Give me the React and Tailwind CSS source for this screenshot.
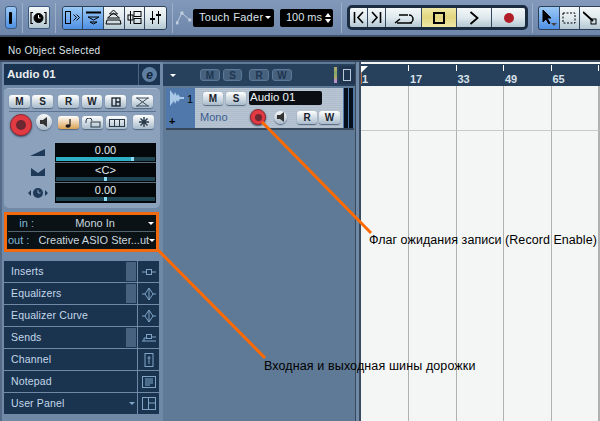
import React from "react";

const FONT = "font-['Liberation_Sans',sans-serif]";

const Sep = ({ className = "" }) => <div className={`w-px h-[30px] bg-[#4d6280] border-r border-[#9db0c8] ${className}`} />;

const ToolBtn = ({ blue, className = "w-[21px]", children }) => (
  <div className={`h-full flex items-center justify-center border-r border-[#33465c] last:border-r-0 ${blue ? "bg-linear-to-b from-[#9ccaf6] to-[#4f90e4]" : "bg-linear-to-b from-[#f4f8f8] via-[#dfe9ee] to-[#b4c8d2]"} ${className}`}>
    {children}
  </div>
);

const Ico = ({ w = 16, h = 16, children, className = "" }) => (
  <svg width={w} height={h} viewBox={`0 0 ${w} ${h}`} fill="none" stroke="#000" className={className}>
    {children}
  </svg>
);

const Toolbar = () => (
  <div className="h-[36px] flex items-center pl-[5px] bg-linear-to-b from-[#8299bb] to-[#6d86a9] border-b border-[#3e5068]">
    <div className="w-[12px] h-[23px] rounded-[3px] flex items-center justify-center bg-linear-to-b from-[#9ccaf6] to-[#4f90e4] border border-[#3c5a80]">
      <div className="w-[3px] h-[12px] rounded-[1px] bg-black" />
    </div>
    <Sep className="ml-[5px]" />
    <div className="ml-[5px] w-[22px] h-[23px] rounded-[2px] flex items-center justify-center bg-linear-to-b from-[#f4f8f8] to-[#b4c8d2] border border-[#3c5a80]">
      <Ico w={17} h={14}>
        <path d="M3 1.5H1v11h2M14 1.5h2v11h-2" strokeWidth="1.2" />
        <circle cx="8.5" cy="7" r="4.5" fill="#000" />
        <path d="M8.5 4v3h2" stroke="#fff" />
      </Ico>
    </div>
    <Sep className="ml-[5px]" />
    <div className="ml-[6px] h-[24px] flex rounded-[3px] overflow-hidden border border-[#2e3f55]">
      <ToolBtn blue>
        <Ico w={17} h={15}>
          <rect x="1.5" y="1.5" width="5" height="12" />
          <path d="M9.5 4.5l3 3-3 3M12.5 4.5l3 3-3 3" />
        </Ico>
      </ToolBtn>
      <ToolBtn blue>
        <Ico w={17} h={15}>
          <path d="M1 2.5h15" strokeWidth="2" />
          <path d="M3 7h11l-5.5 3zM5 12l3.5 2 3.5-2z" />
        </Ico>
      </ToolBtn>
      <ToolBtn>
        <Ico w={17} h={17}>
          <path d="M8.5 1l4 4h-8zM8.5 4l6 5h-12zM2 11h13l1 4H1z" />
        </Ico>
      </ToolBtn>
      <ToolBtn>
        <Ico w={17} h={15}>
          <rect x="2" y="5" width="5" height="5" />
          <rect x="8" y="1.5" width="7" height="5" />
          <rect x="8" y="8.5" width="7" height="5" />
          <path d="M4.5 1v13" />
        </Ico>
      </ToolBtn>
      <ToolBtn>
        <Ico w={13} h={15}>
          <path d="M3.5 1v13M9.5 1v13" />
          <path d="M1 9h5M7 5h5" strokeWidth="2" />
        </Ico>
      </ToolBtn>
    </div>
    <Sep className="ml-[5px]" />
    <svg width="16" height="14" viewBox="0 0 16 14" fill="none" stroke="#c5d0de" className="ml-[3px]">
      <path d="M1 12L6 2l8 7" />
      <rect x="5" y="1" width="2" height="2" fill="#c5d0de" />
      <rect x="0" y="11" width="2" height="2" fill="#c5d0de" />
      <rect x="13" y="8" width="2" height="2" fill="#c5d0de" />
    </svg>
    <div className="ml-[1px] w-[82px] h-[18px] rounded-[2px] bg-black flex items-center justify-between pl-[6px] pr-[3px] text-[11px] text-[#dde4ea] tracking-[0.3px]">
      Touch Fader
      <span className="w-0 h-0 border-x-[3px] border-t-[3px] border-x-transparent border-t-white" />
    </div>
    <div className="ml-[6px] w-[54px] h-[18px] rounded-[2px] bg-black flex items-center justify-between pl-[6px] pr-[2px] text-[11px] text-[#dde4ea]">
      100 ms
      <span className="flex flex-col gap-[2px]">
        <span className="w-0 h-0 border-x-[3px] border-b-[4px] border-x-transparent border-b-white" />
        <span className="w-0 h-0 border-x-[3px] border-t-[4px] border-x-transparent border-t-white" />
      </span>
    </div>
    <Sep className="ml-[8px]" />
    <div className="ml-[5px] h-[25px] flex items-stretch rounded-[5px] border-[3px] border-[#1c2c40] overflow-hidden">
      <ToolBtn className="w-[18px]">
        <Ico w={12} h={13}><path d="M1.5 1v11M10 1L5 6.5l5 5.5" strokeWidth="1.6" /></Ico>
      </ToolBtn>
      <ToolBtn className="w-[18px]">
        <Ico w={12} h={13}><path d="M10.5 1v11M2 1l5 5.5L2 12" strokeWidth="1.6" /></Ico>
      </ToolBtn>
      <ToolBtn className="w-[37px]">
        <Ico w={20} h={13}><path d="M7 12h8a4 4 0 0 0 0-8M14 4H5M3 12h15M1 12l5-4" strokeWidth="1.5" /></Ico>
      </ToolBtn>
      <div className="w-[35px] flex items-center justify-center bg-linear-to-b from-[#f0e8a6] via-[#e2d680] to-[#f0e8a6] border-r border-[#33465c]">
        <div className="w-[12px] h-[12px] border-2 border-black" />
      </div>
      <ToolBtn className="w-[36px]">
        <Ico w={10} h={14}><path d="M1.5 1l7 6-7 6" strokeWidth="1.8" /></Ico>
      </ToolBtn>
      <ToolBtn className="w-[33px]">
        <div className="w-[10px] h-[10px] rounded-full bg-[#b01e28]" />
      </ToolBtn>
    </div>
    <Sep className="ml-[4px]" />
    <div className="ml-[5px] h-[24px] flex rounded-l-[3px] border border-r-0 border-[#2e3f55] overflow-hidden">
      <ToolBtn blue>
        <Ico w={16} h={16}>
          <path d="M2 0l8 8H6l3 5-1 1-3-5-3 3z" fill="#000" />
          <path d="M10 13h6l-3 3z" fill="#444" stroke="none" />
        </Ico>
      </ToolBtn>
      <ToolBtn>
        <Ico w={14} h={12}><rect x="1" y="1" width="12" height="10" strokeDasharray="2 1.5" /></Ico>
      </ToolBtn>
      <ToolBtn className="w-[20px]">
        <Ico w={14} h={14}>
          <path d="M0 1l10 9" strokeWidth="1.8" />
          <rect x="8" y="8" width="5" height="5" />
        </Ico>
      </ToolBtn>
    </div>
  </div>
);

const InfoLine = () => (
  <div className="h-[26px] bg-black border-t border-[#3e4d62] border-b-2 border-b-[#36475c] flex items-center pl-[8px] pt-[3px] text-[10px] text-[#dfe6ea] tracking-[0.35px]">
    No Object Selected
  </div>
);

const Btn = ({ className = "w-[21px]", children }) => (
  <div className={`h-[13px] rounded-[3px] flex items-center justify-center bg-linear-to-b from-[#ffffff] to-[#a9bccb] shadow-[0_1px_1px_#54667f] text-[10px] font-bold text-[#18222c] ${className}`}>
    {children}
  </div>
);

const RecBtn = ({ size = "w-[22px] h-[22px]", inner = "w-[10px] h-[10px]" }) => (
  <div className={`${size} rounded-full bg-[#e23a42] border border-[#8e2a34] flex items-center justify-center shadow-[0_1px_2px_#3d4e66]`}>
    <div className={`${inner} rounded-full bg-[#6b2830]`} />
  </div>
);

const SpeakerBtn = ({ size = "w-[16px] h-[16px]" }) => (
  <div className={`${size} rounded-full bg-linear-to-b from-[#f8fafa] to-[#aabac8] flex items-center justify-center shadow-[0_1px_1px_#54667f]`}>
    <svg width="8" height="10" viewBox="0 0 8 10">
      <path d="M0 3h3l4-3v10L3 7H0z" fill="#333" />
    </svg>
  </div>
);

const Fader = ({ value, fill, knob }) => (
  <div className="h-[20px] flex flex-col border-b border-[#5b6c7c] last:border-b-0">
    <div className="h-[14px] flex items-center justify-center text-[11px] text-[#e4ecf0] leading-none pt-[1px]">{value}</div>
    <div className="mx-[1px] h-[4px] bg-[#1f4452] flex">
      {fill && <div className="bg-[#2db0c6]" style={{ width: fill }} />}
      <div className="w-[3px] bg-[#8adcf4]" style={knob ? { marginLeft: knob } : undefined} />
    </div>
  </div>
);

const Channel = () => (
  <div className="mt-[3px] ml-[2px] w-[156px] h-[120px] rounded-[5px] bg-[#8ba1bc] border-t border-[#a3b5cc] flex flex-col pt-[6px] pl-[5px]">
    <div className="flex items-center">
      <Btn>M</Btn>
      <Btn className="w-[21px] ml-[2px]">S</Btn>
      <Btn className="w-[21px] ml-[5px]">R</Btn>
      <Btn className="w-[20px] ml-[3px]">W</Btn>
      <Btn className="w-[21px] ml-[3px]">
        <svg width="10" height="10" viewBox="0 0 10 10" fill="none" stroke="#18222c" strokeWidth="1.3">
          <rect x="1" y="1" width="8" height="8" />
          <path d="M5 1v8M5 5h4" />
        </svg>
      </Btn>
      <Btn className="w-[21px] ml-[6px]">
        <svg width="15" height="10" viewBox="0 0 15 10" fill="none" stroke="#3c4d5c">
          <path d="M1 1h13M1 9h13M2 1l5.5 4L13 1M2 9l5.5-4L13 9" />
        </svg>
      </Btn>
    </div>
    <div className="mt-[3px] mr-[4px] h-px bg-[#5f7490]" />
    <div className="mt-[2px] flex items-start">
      <div className="ml-[1px]"><RecBtn /></div>
      <div className="ml-[4px]"><SpeakerBtn /></div>
      <Btn className="w-[21px] h-[12px] ml-[6px] mt-[2px] from-[#f2c878] to-[#d9a24e]">
        <svg width="8" height="10" viewBox="0 0 8 10">
          <ellipse cx="3" cy="8" rx="2.5" ry="1.8" fill="#1a1a1a" />
          <path d="M5 1v7" stroke="#1a1a1a" strokeWidth="1.2" />
        </svg>
      </Btn>
      <Btn className="w-[21px] ml-[3px] mt-[2px]">
        <svg width="16" height="10" viewBox="0 0 16 10" fill="none" stroke="#2a3a48">
          <rect x="6" y="4" width="9" height="5" />
          <path d="M1 5V3a3 3 0 0 1 6 0" />
        </svg>
      </Btn>
      <Btn className="w-[21px] ml-[3px] mt-[2px]">
        <svg width="16" height="8" viewBox="0 0 16 8" fill="none" stroke="#2a3a48">
          <rect x="0.5" y="0.5" width="15" height="7" />
          <path d="M5.5 0v8M10.5 0v8" />
        </svg>
      </Btn>
      <Btn className="w-[21px] h-[14px] ml-[6px] mt-[1px] from-[#eef2f4] to-[#a6b8c8]">
        <svg width="10" height="10" viewBox="0 0 10 10" stroke="#2a3a48" strokeWidth="1.4">
          <path d="M5 0v10M0 5h10M1.5 1.5l7 7M8.5 1.5l-7 7" />
        </svg>
      </Btn>
    </div>
    <div className="mt-[7px] flex">
      <div className="w-[46px] flex flex-col items-end pr-[9px]">
        <svg width="16" height="20" viewBox="0 0 16 20" className="mt-[1px] shrink-0">
          <path d="M0 12L15 5v7z" fill="#1f3a58" />
        </svg>
        <svg width="16" height="20" viewBox="0 0 16 20" className="mt-[3px] shrink-0">
          <path d="M1 1l7 5 7-5v8H1z" fill="#1f3a58" />
        </svg>
        <svg width="20" height="12" viewBox="0 0 20 12" className="-mr-[2px] shrink-0">
          <path d="M0 6l3-3v6zM20 6l-3-3v6z" fill="#1f3a58" />
          <circle cx="10" cy="6" r="5" fill="#1f3a58" />
          <path d="M10 3v3h2.5" stroke="#8ba1bc" fill="none" />
        </svg>
      </div>
      <div className="w-[101px] h-[60px] bg-[#04080a] flex flex-col">
        <Fader value="0.00" fill="75px" />
        <Fader value="<C>" knob="48px" />
        <Fader value="0.00" knob="48px" />
      </div>
    </div>
  </div>
);

const Routing = () => (
  <div className="mt-[4px] ml-[2px] w-[155px] h-[40px] border-[3px] border-[#f26a10] bg-[#0b1216] flex flex-col text-[11px] text-[#c9d6de]">
    <div className="h-[17px] flex items-center border-b border-[#53646f] mx-[1px]">
      <span className="w-[26px] text-right text-[#7fb6d6]">in :</span>
      <span className="flex-1 text-center pl-[8px]">Mono In</span>
      <span className="mr-[1px] w-0 h-0 border-x-[3px] border-t-[3px] border-x-transparent border-t-white" />
    </div>
    <div className="flex-1 flex items-center mx-[1px] whitespace-nowrap">
      <span className="w-[26px] text-right text-[#7fb6d6]">out :</span>
      <span className="flex-1 pl-[9px]">Creative ASIO Ster...ut</span>
      <span className="mr-[1px] w-0 h-0 border-x-[3px] border-t-[3px] border-x-transparent border-t-white" />
    </div>
  </div>
);

const iconProps = { fill: "none", stroke: "#7fa4c8" };

const sections = [
  { label: "Inserts", tab: true, icon: <svg width="14" height="8" viewBox="0 0 14 8" {...iconProps}><path d="M0 4h4M10 4h4" /><rect x="4.500" y="1.500" width="5" height="5" /></svg> },
  { label: "Equalizers", tab: true, icon: <svg width="14" height="14" viewBox="0 0 14 14" {...iconProps}><path d="M0 7h3l4-6 4 6h3M3 7l4 6 4-6M7 1v12" /></svg> },
  { label: "Equalizer Curve", icon: <svg width="14" height="14" viewBox="0 0 14 14" {...iconProps}><path d="M0 7h3l4-6 4 6h3M3 7l4 6 4-6M7 1v12" /></svg> },
  { label: "Sends", tab: true, icon: <svg width="14" height="9" viewBox="0 0 14 9" {...iconProps}><path d="M0 8h14M2 8V5h3M10 4h4" /><rect x="4.500" y="1.500" width="5" height="4" /></svg> },
  { label: "Channel", icon: <svg width="10" height="14" viewBox="0 0 10 14" {...iconProps}><rect x="1" y="0.500" width="8" height="13" /><path d="M5 3v8M3.500 5h3" /></svg> },
  { label: "Notepad", icon: <svg width="14" height="12" viewBox="0 0 14 12" {...iconProps}><rect x="0.500" y="0.500" width="13" height="11" /><path d="M3 3h8M3 5h8M3 7h8M3 9h5" /></svg> },
  { label: "User Panel", arrow: true, icon: <svg width="14" height="13" viewBox="0 0 14 13" {...iconProps}><rect x="0.500" y="0.500" width="13" height="12" /><path d="M6.500 0v13M6.500 6h7" /></svg> },
];

const Sections = () => (
  <div className="mt-[9px] ml-[2px] w-[155px] flex flex-col gap-px">
    {sections.map((s) => (
      <div key={s.label} className="h-[21px] flex gap-px">
        <div className="w-[133px] bg-[#1a3450] flex items-center pl-[7px] text-[10.5px] text-[#c4d8ea] tracking-[0.15px]">
          <span className="flex-1">{s.label}</span>
          {s.tab && <div className="w-[10px] h-[19px] mr-px bg-[#46627f]" />}
          {s.arrow && <span className="mr-[2px] w-0 h-0 border-x-[3px] border-t-[3px] border-x-transparent border-t-[#7fa4c8]" />}
        </div>
        <div className="flex-1 bg-[#1a3450] flex items-center justify-center">{s.icon}</div>
      </div>
    ))}
  </div>
);

const Inspector = () => (
  <div className="w-[163px] shrink-0 flex flex-col bg-[#7089a6] border-l-2 border-[#556a86]">
    <div className="mt-[2px] ml-[2px] w-[156px] h-[21px] flex bg-[#1a3350]">
      <div className="flex-1 flex items-center pl-[3px] text-[11.5px] font-bold text-[#e9eef2]">Audio 01</div>
      <div className="w-[22px] border-l border-[#4b6580] flex items-center justify-center">
        <div className="w-[15px] h-[15px] rounded-full bg-[#5f7fa2] flex items-center justify-center text-[12px] font-bold italic text-[#10233a] leading-none">e</div>
      </div>
    </div>
    <Channel />
    <Routing />
    <Sections />
  </div>
);

const HeaderPill = ({ children, className = "w-[20px]" }) => (
  <div className={`h-[12px] rounded-[3px] bg-[#46617e] border border-[#5b7896] flex items-center justify-center text-[10px] font-bold text-[#1e3550] ${className}`}>
    {children}
  </div>
);

const TrackList = () => (
  <div className="w-[193px] shrink-0 flex flex-col bg-[#5f7a96] border-r border-[#3a4a5e]">
    <div className="mt-[2px] h-[22px] flex items-center bg-[#27415d] pl-[7px]">
      <span className="w-0 h-0 border-x-[3px] border-t-[3px] border-x-transparent border-t-white" />
      <HeaderPill className="w-[20px] ml-[24px]">M</HeaderPill>
      <HeaderPill className="w-[19px] ml-[3px]">S</HeaderPill>
      <HeaderPill className="w-[20px] ml-[7px]">R</HeaderPill>
      <HeaderPill className="w-[20px] ml-[3px]">W</HeaderPill>
      <div className="ml-[42px] flex flex-col">
        <span className="w-[3px] h-[4px] bg-[#a8a868]" />
        <span className="w-[3px] h-[4px] bg-[#86a868]" />
        <span className="w-[3px] h-[4px] bg-[#a8a868]" />
        <span className="w-[3px] h-[4px] bg-[#b890c8]" />
      </div>
      <div className="ml-[2px] w-[16px] h-[18px] bg-[#1f3550] flex items-center justify-center">
        <div className="w-[8px] h-[12px] border border-[#b8c8d8]" />
      </div>
    </div>
    <div className="mt-[2px] ml-[3px] mr-[1px] h-[42px] flex border-b-2 border-[#36475c]">
      <div className="w-[29px] bg-[#5078aa] relative flex items-start pl-[4px] pt-[2px] text-[11px] text-black">
        <svg width="14" height="16" viewBox="0 0 14 16" fill="#a9c8e8">
          <path d="M0 0l4 5 1-3 2 4 1-2 2 3h4v2h-4l-2 3-1-2-2 4-1-3-4 5z" />
        </svg>
        <span className="ml-[3px] mt-[1px]">1</span>
        <span className="absolute left-[3px] bottom-[-1px] font-bold">+</span>
      </div>
      <div className="flex-1 bg-[repeating-linear-gradient(0deg,#aebccb_0,#aebccb_1px,#b8c5d2_1px,#b8c5d2_2px)] flex flex-col pl-[8px] pt-[3px]">
        <div className="flex items-center">
          <Btn className="w-[20px]">M</Btn>
          <Btn className="w-[20px] ml-[3px]">S</Btn>
          <div className="ml-[3px] w-[73px] h-[14px] rounded-[2px] bg-[#0a0e12] text-[11.5px] text-[#f0f4f6] flex items-center pl-px leading-none">Audio 01</div>
        </div>
        <div className="mt-[4px] flex items-center">
          <span className="-ml-[3px] w-[50px] text-[11px] text-[#3c5c90] leading-none">Mono</span>
          <RecBtn size="w-[16px] h-[16px]" inner="w-[7px] h-[7px]" />
          <div className="ml-[8px]"><SpeakerBtn size="w-[13px] h-[13px]" /></div>
          <Btn className="w-[20px] ml-[10px]">R</Btn>
          <Btn className="w-[21px] ml-[2px]">W</Btn>
        </div>
      </div>
      <div className="w-[11px] flex gap-px bg-[#5078aa] px-px">
        <div className="flex-1 bg-[#06101c]" />
        <div className="flex-1 bg-[#06101c]" />
      </div>
    </div>
  </div>
);

const bars = ["1", "17", "33", "49", "65", "81"];

const Arranger = () => (
  <div className="flex-1 flex flex-col bg-[#f4f6f6] border-l-2 border-[#3a4a5e] ml-[3px] overflow-hidden">
    <div className="mt-[2px] h-[22px] bg-[#27415d] flex shrink-0 relative">
      <div className="absolute left-0 top-[2px] w-0 h-0 border-t-[7px] border-r-[7px] border-t-white border-r-transparent" />
      <div className="absolute left-0 top-[9px] w-px h-[11px] bg-[#c8683a]" />
      {bars.map((b, i) => (
        <div key={b} className={`shrink-0 relative ${i === 0 ? "w-[48px]" : "w-[47.500px]"} pl-[1px] text-[11px] font-bold text-[#d8e2ea] pt-[10px] leading-none`}>
          {i > 0 && <div className="absolute -left-px top-[1px] h-[6px] w-px bg-white" />}
          {b}
        </div>
      ))}
    </div>
    <div className="flex-1 grid grid-cols-[48px_47.500px_47.500px_47.500px_47.500px_1fr] grid-rows-[45px_1fr]">
      {Array.from({ length: 12 }).map((_, i) => (
        <div key={i} className={`border-r border-[#b0b2b2] ${i < 6 ? "border-b border-b-[#c8caca]" : ""}`} />
      ))}
    </div>
  </div>
);

export default function App() {
  return (
    <div className={`relative w-[600px] h-[421px] overflow-hidden flex flex-col bg-[#7089a6] ${FONT}`}>
      <Toolbar />
      <InfoLine />
      <div className="flex-1 flex min-h-0">
        <Inspector />
        <TrackList />
        <Arranger />
      </div>

      {/* callouts */}
      <svg width="600" height="421" className="absolute inset-0 pointer-events-none">
        <path d="M262 122L371 233M158 250L265 358" stroke="#ff6a00" strokeWidth="3" fill="none" />
      </svg>
      <div className="absolute left-[369px] top-[232px] text-[12.5px] tracking-[0.05px] text-black whitespace-nowrap leading-[16px]">
        Флаг ожидания записи (Record Enable)
      </div>
      <div className="absolute left-[264px] top-[358px] text-[12.5px] tracking-[0.12px] text-black whitespace-nowrap leading-[16px]">
        Входная и выходная шины дорожки
      </div>
    </div>
  );
}
